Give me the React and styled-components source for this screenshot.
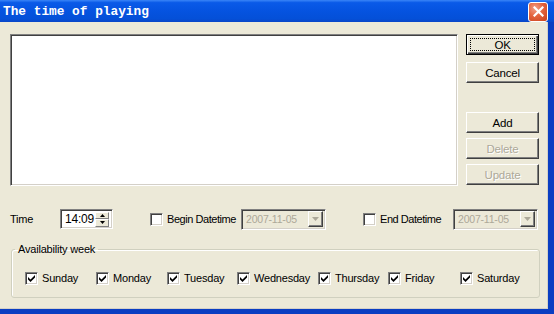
import React from 'react'
import styled, { createGlobalStyle } from 'styled-components'

const GlobalStyle = createGlobalStyle`
  html, body {
    margin: 0;
    padding: 0;
    background: #ece9d8;
  }
  body {
    font-family: "Liberation Sans", Arial, sans-serif;
    font-size: 11px;
    letter-spacing: -0.2px;
    color: #000;
  }
`

const Window = styled.div`
  width: 554px;
  height: 314px;
  display: flex;
  flex-direction: column;
  overflow: hidden;
`

const TitleBar = styled.div`
  height: 22px;
  display: flex;
  align-items: center;
  justify-content: space-between;
  padding: 0 6px 0 3px;
  background: linear-gradient(180deg, #3a85f7 0%, #0a5ae8 12%, #0553e0 50%, #0450d8 85%, #0a46c8 100%);
  box-sizing: border-box;
`

const Title = styled.span`
  color: #fff;
  font-family: "Liberation Mono", "DejaVu Sans Mono", monospace;
  font-weight: bold;
  font-size: 12.8px;
  letter-spacing: 0;
  margin-top: 1px;
`

const CloseButton = styled.div`
  width: 20px;
  height: 20px;
  margin-top: 1px;
  border: 1px solid #fff;
  border-radius: 3px;
  background: radial-gradient(circle at 35% 30%, #f2a08a 0%, #e4643e 45%, #c8401c 100%);
  display: flex;
  align-items: center;
  justify-content: center;
  box-sizing: border-box;
`

const Frame = styled.div`
  flex: 1;
  display: flex;
  border-right: 6px solid #0a3ec2;
  border-bottom: 5px solid #0a3ec2;
  background: #ece9d8;
`

const Client = styled.div`
  flex: 1;
  padding: 12px 0 0 10px;
  display: flex;
  flex-direction: column;
  border-right: 1px solid #d4d0c8;
  border-bottom: 1px solid #d4d0c8;
`

const TopRow = styled.div`
  display: flex;
  gap: 8px;
  height: 152px;
`

const ListBox = styled.div`
  width: 448px;
  height: 152px;
  box-sizing: border-box;
  background: #fff;
  border-top: 1px solid #808080;
  border-left: 1px solid #808080;
  border-right: 1px solid #fff;
  border-bottom: 1px solid #fff;
  box-shadow: inset 1px 1px 0 #404040, inset -1px -1px 0 #d4d0c8;
`

const ButtonColumn = styled.div`
  width: 73px;
  display: flex;
  flex-direction: column;
`

const Button = styled.div`
  height: 21px;
  box-sizing: border-box;
  margin-top: ${p => p.$gap || 0}px;
  display: flex;
  align-items: center;
  justify-content: center;
  background: #ece9d8;
  font-size: 11.5px;
  color: ${p => (p.$disabled ? '#aca899' : '#000')};
  text-shadow: ${p => (p.$disabled ? '1px 1px 0 #fff' : 'none')};
  border: 1px solid;
  border-color: ${p => (p.$default ? '#000' : '#fff #404040 #404040 #fff')};
  box-shadow: ${p =>
    p.$default
      ? 'inset 1px 1px 0 #fff, inset -1px -1px 0 #404040, inset -2px -2px 0 #808080'
      : 'inset -1px -1px 0 #808080'};
  position: relative;
`

const Focus = styled.span`
  position: absolute;
  left: 3px;
  top: 3px;
  right: 3px;
  bottom: 3px;
  border: 1px dotted #000;
`

const FieldRow = styled.div`
  display: flex;
  align-items: center;
  margin-top: 22px;
  height: 22px;
`

const Label = styled.span`
  margin-left: ${p => p.$ml || 0}px;
  width: ${p => (p.$w ? `${p.$w}px` : 'auto')};
  letter-spacing: ${p => (p.$tight ? '-0.45px' : '-0.2px')};
  white-space: nowrap;
  font-size: 11px;
  flex-shrink: 0;
`

const Sunken = styled.div`
  box-sizing: border-box;
  width: ${p => p.$w}px;
  height: ${p => p.$h || 20}px;
  margin-left: ${p => p.$ml || 0}px;
  display: flex;
  align-items: center;
  background: ${p => (p.$disabled ? '#ece9d8' : '#fff')};
  border-top: 1px solid #808080;
  border-left: 1px solid #808080;
  border-right: 1px solid #fff;
  border-bottom: 1px solid #fff;
  box-shadow: inset 1px 1px 0 #404040, inset -1px -1px 0 #d4d0c8;
  padding: 2px 2px 2px 3px;
  flex-shrink: 0;
`

const FieldText = styled.span`
  flex: 1;
  color: ${p => (p.$disabled ? '#aca899' : '#000')};
  font-size: ${p => (p.$disabled ? 10.5 : 12)}px;
  padding-left: 1px;
`

const SpinStack = styled.div`
  display: flex;
  flex-direction: column;
  width: 14px;
  height: 15px;
  margin-right: 1px;
`

const SpinHalf = styled.div`
  flex: 1;
  box-sizing: border-box;
  background: #ece9d8;
  border: 1px solid;
  border-color: #fff #808080 #808080 #fff;
  display: flex;
  align-items: center;
  justify-content: center;
`

const DropButton = styled.div`
  width: 15px;
  height: 16px;
  box-sizing: border-box;
  background: #ece9d8;
  border: 1px solid;
  border-color: #fff #404040 #404040 #fff;
  box-shadow: inset -1px -1px 0 #808080;
  display: flex;
  align-items: center;
  justify-content: center;
`

const Box = styled.div`
  width: 13px;
  height: 13px;
  box-sizing: border-box;
  margin-left: ${p => p.$ml || 0}px;
  background: #fff;
  border-top: 1px solid #808080;
  border-left: 1px solid #808080;
  border-right: 1px solid #fff;
  border-bottom: 1px solid #fff;
  box-shadow: inset 1px 1px 0 #404040, inset -1px -1px 0 #d4d0c8;
  display: flex;
  align-items: center;
  justify-content: center;
  flex-shrink: 0;
`

const Group = styled.fieldset`
  margin: 13px 0 0 1px;
  padding: 0 0 0 13px;
  width: 529px;
  height: 55px;
  box-sizing: border-box;
  border: 1px solid #d0d0bf;
  border-radius: 3px;
  box-shadow: 1px 1px 0 #fff inset;
`

const Legend = styled.legend`
  margin-left: -10px;
  padding: 0 3px;
  font-size: 11px;
`

const WeekRow = styled.div`
  display: flex;
  align-items: center;
  height: 16px;
  margin-top: 15px;
`

const Day = styled.div`
  display: flex;
  align-items: center;
  width: ${p => (p.$w ? `${p.$w}px` : 'auto')};
  flex-shrink: 0;
`

const Arrow = ({ up, color = '#000', w = 7, h = 4 }) => (
  <svg width={w} height={h} viewBox="0 0 7 4">
    <path d={up ? 'M3.5 0 L7 4 L0 4 Z' : 'M0 0 L7 0 L3.5 4 Z'} fill={color} />
  </svg>
)

const Tick = () => (
  <svg width="7" height="7" viewBox="0 0 7 7">
    <path d="M0 2 L0 4.5 L2.5 7 L7 2.5 L7 0 L2.5 4.5 Z" fill="#000" />
  </svg>
)

const days = [
  ['Sunday', 71],
  ['Monday', 71],
  ['Tuesday', 70],
  ['Wednesday', 81],
  ['Thursday', 70],
  ['Friday', 72],
  ['Saturday', 0]
]

const App = () => (
  <>
    <GlobalStyle />
    <Window>
      <TitleBar>
        <Title>The time of playing</Title>
        <CloseButton>
          <svg width="11" height="11" viewBox="0 0 11 11">
            <path d="M1.5 1.5 L9.5 9.5 M9.5 1.5 L1.5 9.5" stroke="#fff" strokeWidth="2.2" strokeLinecap="square" />
          </svg>
        </CloseButton>
      </TitleBar>
      <Frame>
        <Client>
          <TopRow>
            <ListBox />
            <ButtonColumn>
              <Button $default>
                <Focus />
                OK
              </Button>
              <Button $gap={7}>Cancel</Button>
              <Button $gap={29}>Add</Button>
              <Button $gap={5} $disabled>Delete</Button>
              <Button $gap={5} $disabled>Update</Button>
            </ButtonColumn>
          </TopRow>

          <FieldRow>
            <Label $w={50}>Time</Label>
            <Sunken $w={53} $h={20}>
              <FieldText>14:09</FieldText>
              <SpinStack>
                <SpinHalf><Arrow up w={5} h={3} /></SpinHalf>
                <SpinHalf><Arrow w={5} h={3} /></SpinHalf>
              </SpinStack>
            </Sunken>
            <Box $ml={37} />
            <Label $ml={4} $w={74} $tight>Begin Datetime</Label>
            <Sunken $w={85} $h={21} $disabled>
              <FieldText $disabled>2007-11-05</FieldText>
              <DropButton><Arrow color="#aca899" /></DropButton>
            </Sunken>
            <Box $ml={37} />
            <Label $ml={4} $w={73} $tight>End Datetime</Label>
            <Sunken $w={85} $h={21} $disabled>
              <FieldText $disabled>2007-11-05</FieldText>
              <DropButton><Arrow color="#aca899" /></DropButton>
            </Sunken>
          </FieldRow>

          <Group>
            <Legend>Availability week</Legend>
            <WeekRow>
              {days.map(([name, w]) => (
                <Day key={name} $w={w}>
                  <Box><Tick /></Box>
                  <Label $ml={4}>{name}</Label>
                </Day>
              ))}
            </WeekRow>
          </Group>
        </Client>
      </Frame>
    </Window>
  </>
)

export default App
